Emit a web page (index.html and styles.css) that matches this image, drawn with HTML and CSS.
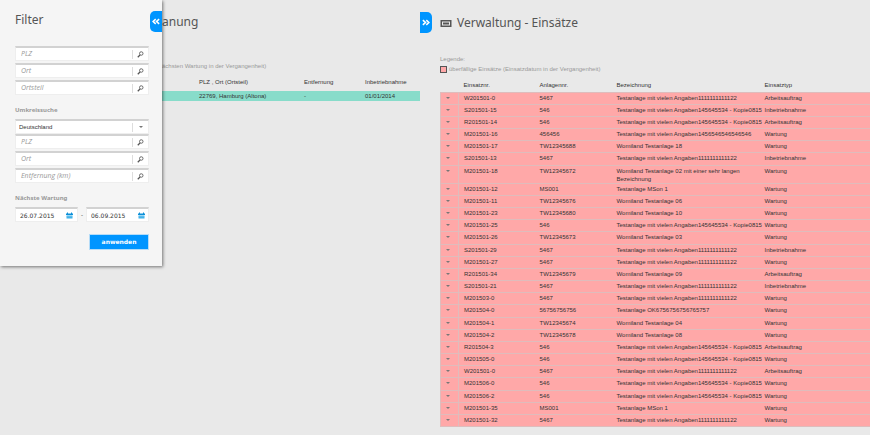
FILE: index.html
```html
<!DOCTYPE html>
<html lang="de">
<head>
    <meta charset="UTF-8">
    <meta name="viewport" content="width=device-width, initial-scale=1.0">
    <title>Verwaltung - Einsätze</title>
    <link rel="stylesheet" href="styles.css">
</head>
<body>
    <svg class="sprite" width="0" height="0" aria-hidden="true">
        <symbol id="search" viewBox="0 0 14 14">
            <circle cx="8.5" cy="5" r="3.5" fill="none" stroke="#555" stroke-width="1.7"/>
            <path d="M6 8L1.5 12.5" stroke="#555" stroke-width="2.4"/>
        </symbol>
        <symbol id="calendar" viewBox="0 0 14 12">
            <path d="M0 2h2V0h2v2h6V0h2v2h2v3H0z" fill="#0c8fd8"/>
            <path d="M1 6h12v6H1z" fill="#39aee8"/>
            <path d="M2 8.5h10" stroke="#8fd2f4"/>
        </symbol>
        <symbol id="arrows" viewBox="0 0 14 12">
            <path d="M1.5 2L6 6l-4.5 4M7.5 2L12 6l-4.5 4" fill="none" stroke="#fff" stroke-width="2.8"/>
        </symbol>
    </svg>

    <div class="page">
        <aside class="filter">
            <button class="tab tab-close" type="button" aria-label="Filter schließen"><svg><use href="#arrows"/></svg></button>
            <h2>Filter</h2>
            <form>
                <div class="fields">
                    <div class="field"><input type="text" placeholder="PLZ" aria-label="PLZ"><button type="button" aria-label="PLZ suchen"><svg><use href="#search"/></svg></button></div>
                    <div class="field"><input type="text" placeholder="Ort" aria-label="Ort"><button type="button" aria-label="Ort suchen"><svg><use href="#search"/></svg></button></div>
                    <div class="field"><input type="text" placeholder="Ortsteil" aria-label="Ortsteil"><button type="button" aria-label="Ortsteil suchen"><svg><use href="#search"/></svg></button></div>
                </div>

                <h3>Umkreissuche</h3>
                <div class="field land">
                    <select aria-label="Land"><option>Deutschland</option></select>
                    <span class="caret"></span>
                </div>
                <div class="fields">
                    <div class="field"><input type="text" placeholder="PLZ" aria-label="PLZ Umkreis"><button type="button" aria-label="PLZ suchen"><svg><use href="#search"/></svg></button></div>
                    <div class="field"><input type="text" placeholder="Ort" aria-label="Ort Umkreis"><button type="button" aria-label="Ort suchen"><svg><use href="#search"/></svg></button></div>
                    <div class="field"><input type="text" placeholder="Entfernung (km)" aria-label="Entfernung (km)"><button type="button" aria-label="Entfernung suchen"><svg><use href="#search"/></svg></button></div>
                </div>

                <h3>Nächste Wartung</h3>
                <div class="dates">
                    <div class="field date"><input type="text" value="26.07.2015" aria-label="Von"><button type="button" aria-label="Kalender von"><svg><use href="#calendar"/></svg></button></div>
                    <span>-</span>
                    <div class="field date"><input type="text" value="06.09.2015" aria-label="Bis"><button type="button" aria-label="Kalender bis"><svg><use href="#calendar"/></svg></button></div>
                </div>
                <button class="apply" type="submit">anwenden</button>
            </form>
        </aside>

        <section class="planung">
            <h1>anung</h1>
            <p class="legend">ächsten Wartung in der Vergangenheit)</p>
            <table>
                <thead>
                    <tr><th class="col-ort">PLZ , Ort (Ortsteil)</th><th class="col-entf">Entfernung</th><th>Inbetriebnahme</th></tr>
                </thead>
                <tbody>
                    <tr><td class="col-ort">22769, Hamburg (Altona)</td><td>-</td><td>01/01/2014</td></tr>
                </tbody>
            </table>
        </section>

        <main class="einsaetze">
            <button class="tab tab-open" type="button" aria-label="Planung öffnen"><svg><use href="#arrows"/></svg></button>
            <h1>
                <svg class="title-icon" viewBox="0 0 22 14"><path d="M1.5 1.5h19v11h-19z" fill="none" stroke="#555" stroke-width="3"/><path d="M5 5h12v4H5z" fill="#555"/></svg>
                Verwaltung - Einsätze
            </h1>
            <p class="legend">Legende:</p>
            <p class="legend"><span class="swatch"></span>überfällige Einsätze (Einsatzdatum in der Vergangenheit)</p>
            <table>
                <thead>
                    <tr><th class="col-toggle"></th><th class="col-first">Einsatznr.</th><th class="col-nr">Anlagennr.</th><th class="col-name">Bezeichnung</th><th>Einsatztyp</th></tr>
                </thead>
                <tbody id="rows"></tbody>
            </table>
        </main>
    </div>

    <script>
        const LONG = "Testanlage mit vielen Angaben1111111111122";
        const KOPIE = "Testanlage mit vielen Angaben145645534 - Kopie0815";

        const rows = [
            ["W201501-0", "5467", LONG, "Arbeitsauftrag"],
            ["S201501-15", "546", KOPIE, "Inbetriebnahme"],
            ["R201501-14", "546", KOPIE, "Arbeitsauftrag"],
            ["M201501-16", "456456", "Testanlage mit vielen Angaben1456546546546546", "Wartung"],
            ["M201501-17", "TW12345688", "Womiland Testanlage 18", "Wartung"],
            ["S201501-13", "5467", LONG, "Inbetriebnahme"],
            ["M201501-18", "TW12345672", "Womiland Testanlage 02 mit einer sehr langen<br>Bezeichnung", "Wartung"],
            ["M201501-12", "MS001", "Testanlage MSon 1", "Wartung"],
            ["M201501-11", "TW12345676", "Womiland Testanlage 06", "Wartung"],
            ["M201501-23", "TW12345680", "Womiland Testanlage 10", "Wartung"],
            ["M201501-25", "546", KOPIE, "Wartung"],
            ["M201501-26", "TW12345673", "Womiland Testanlage 03", "Wartung"],
            ["S201501-29", "5467", LONG, "Inbetriebnahme"],
            ["M201501-27", "5467", LONG, "Wartung"],
            ["R201501-34", "TW12345679", "Womiland Testanlage 09", "Arbeitsauftrag"],
            ["S201501-21", "5467", LONG, "Inbetriebnahme"],
            ["M201503-0", "5467", LONG, "Wartung"],
            ["M201504-0", "56756756756", "Testanlage OK6756756756765757", "Wartung"],
            ["M201504-1", "TW12345674", "Womiland Testanlage 04", "Wartung"],
            ["M201504-2", "TW12345678", "Womiland Testanlage 08", "Wartung"],
            ["R201504-3", "546", KOPIE, "Arbeitsauftrag"],
            ["M201505-0", "546", KOPIE, "Wartung"],
            ["W201501-0", "5467", LONG, "Arbeitsauftrag"],
            ["M201506-0", "546", KOPIE, "Wartung"],
            ["M201506-2", "546", KOPIE, "Wartung"],
            ["M201501-35", "MS001", "Testanlage MSon 1", "Wartung"],
            ["M201501-32", "5467", LONG, "Wartung"]
        ];

        document.getElementById("rows").innerHTML = rows.map(row =>
            `<tr><td class="toggle"><button type="button" aria-label="Details"></button></td>${row.map(cell => `<td>${cell}</td>`).join("")}</tr>`
        ).join("");
    </script>
</body>
</html>
```
FILE: styles.css
```css
* {
    box-sizing: border-box;
}

body {
    margin: 0;
    background: #e9e9e9;
    color: #333;
    font-family: "Liberation Sans", Arial, sans-serif;
    font-size: 6px;
    line-height: 8px;
}

button, input, select {
    margin: 0;
    padding: 0;
    border: none;
    background: none;
    font: inherit;
    color: inherit;
}

button {
    cursor: pointer;
}

.sprite {
    position: absolute;
}

.page {
    display: grid;
    grid-template-columns: minmax(0, 162fr) minmax(0, 258fr) minmax(0, 450fr);
    align-items: start;
}

h1, h2 {
    margin: 0;
    font-family: "Noto Sans", sans-serif;
    font-size: 12px;
    line-height: 16px;
    font-weight: normal;
    color: #555;
}

.legend {
    margin: 0;
    line-height: 10px;
    color: #999;
}

/* filter */
.filter {
    position: relative;
    padding: 12px 13px 16px 15px;
    background: #f5f5f5;
    box-shadow: 1px 1px 3px rgba(0, 0, 0, 0.5);
}

.filter h2 {
    margin-bottom: 18px;
}

.filter h3 {
    margin: 11px 0 5px;
    font-family: "Noto Sans", sans-serif;
    font-size: 6px;
    line-height: 8px;
    color: #999;
}

.fields {
    display: grid;
    gap: 2px;
}

.field {
    display: flex;
    height: 15px;
    align-items: center;
    background: #fff;
    border: 1px solid #eee;
    border-top: 2px solid #d2d2d2;
}

.field input, .field select {
    flex: 1;
    min-width: 0;
    height: 12px;
    padding-left: 5px;
    line-height: 8px;
}

.field input::placeholder {
    font-family: "Open Sans", sans-serif;
    font-size: 7px;
    color: #999;
    font-style: italic;
    opacity: 1;
}

.field button, .caret {
    display: flex;
    width: 16px;
    height: 9px;
    align-items: center;
    justify-content: center;
    border-left: 1px solid #ddd;
}

.field svg {
    width: 7px;
    height: 7px;
}

.land select {
    appearance: none;
    padding-left: 3px;
}

.caret::before, .toggle button::before {
    content: "";
    border: 2px solid transparent;
    border-top-color: #777;
    border-bottom: 0;
}

.dates {
    display: flex;
    align-items: center;
    justify-content: space-between;
}

.date {
    width: 47%;
}

.date input {
    padding-left: 4px;
    font-family: "DejaVu Sans", sans-serif;
}

.date button {
    width: 14px;
    border: none;
}

.apply {
    display: block;
    width: 60px;
    height: 16px;
    margin: 12px 0 0 auto;
    background: #0095ff;
    border: 1px solid #b5dcf8;
    font-family: "DejaVu Sans", sans-serif;
    font-weight: bold;
    color: #fff;
}

/* panel tabs */
.tab {
    position: absolute;
    display: flex;
    width: 12px;
    height: 21px;
    align-items: center;
    justify-content: center;
    background: #0095ff;
}

.tab svg {
    width: 8px;
    height: 7px;
}

.tab-close {
    top: 11px;
    right: 0;
    border-radius: 5px 0 0 5px;
}

.tab-close svg {
    transform: rotate(180deg);
}

.tab-open {
    top: 12px;
    left: 0;
    border-radius: 0 5px 5px 0;
}

/* tables */
table {
    width: 100%;
    border-collapse: collapse;
    table-layout: fixed;
}

th, td {
    height: 12px;
    padding: 1px 0 0;
    text-align: left;
    vertical-align: top;
    font-weight: normal;
    white-space: nowrap;
}

th {
    height: 14px;
    padding-top: 3px;
}

.planung {
    padding-top: 14px;
}

.planung .legend {
    margin-top: 31px;
}

.planung table {
    margin-top: 4px;
}

.planung th {
    height: 16px;
}

.planung tbody {
    background: #88dcca;
}

.planung tbody td {
    height: 10px;
}

.planung .col-ort {
    width: 142px;
    padding-left: 37px;
}

.planung .col-entf {
    width: 61px;
}

.einsaetze {
    position: relative;
    padding: 15px 0 8px 20px;
}

.einsaetze h1 {
    display: flex;
    align-items: center;
    gap: 5px;
    margin-bottom: 23px;
}

.title-icon {
    width: 12px;
    height: 7px;
}

.swatch {
    display: inline-block;
    width: 7px;
    height: 7px;
    margin-right: 2px;
    border: 1px solid #555;
    background: #ffa8a8;
    vertical-align: middle;
}

.einsaetze table {
    margin-top: 4px;
}

.col-toggle {
    width: 18px;
}

.col-first {
    width: 81px;
}

.col-nr {
    width: 77px;
}

.col-name {
    width: 148px;
}

.einsaetze tbody {
    background: #ffa8a8;
}

.einsaetze tbody tr {
    border: 1px solid #dfbcbc;
    border-right: 0;
}

.einsaetze tbody tr:nth-child(6n) td {
    height: 13px;
}

.toggle {
    border-right: 1px solid #dfbcbc;
}

.toggle button {
    display: flex;
    width: 14px;
    height: 9px;
    align-items: center;
    justify-content: center;
}

.col-first, .toggle + td {
    padding-left: 5px;
}
```
